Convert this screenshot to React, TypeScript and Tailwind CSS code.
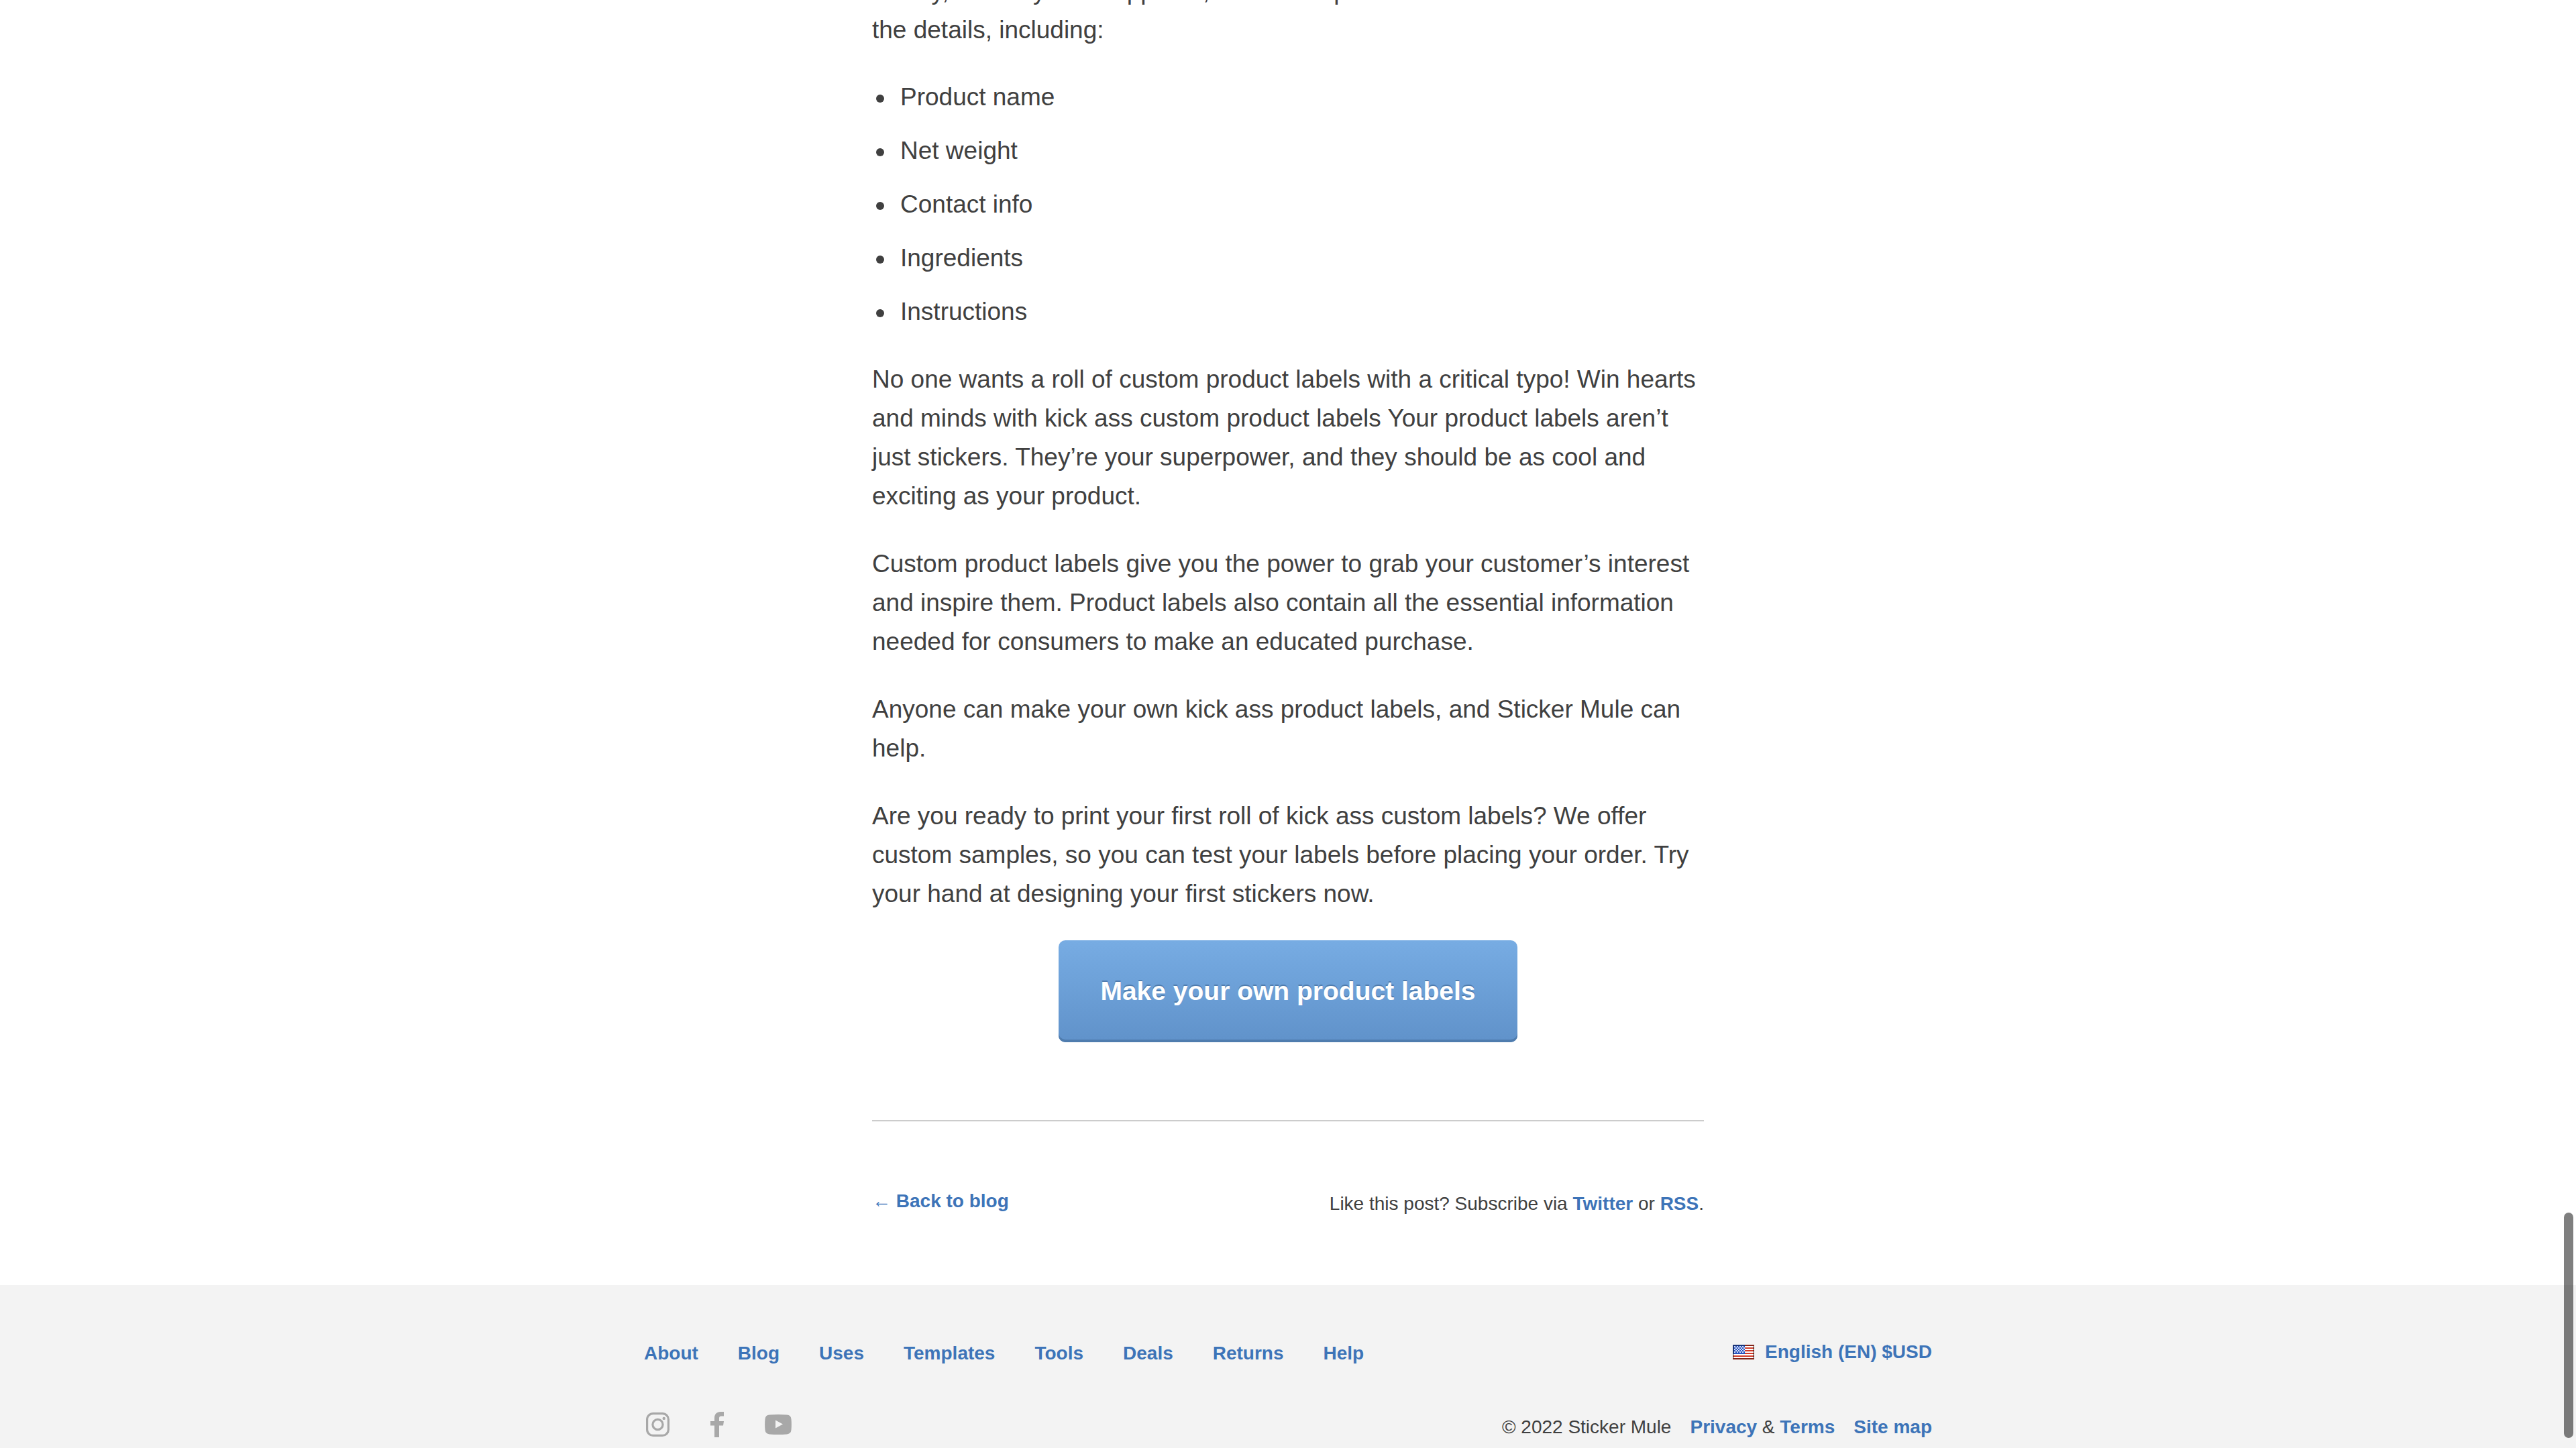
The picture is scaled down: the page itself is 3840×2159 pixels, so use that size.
import React from "react";

const paragraphs = [
  "No one wants a roll of custom product labels with a critical typo! Win hearts and minds with kick ass custom product labels Your product labels aren’t just stickers. They’re your superpower, and they should be as cool and exciting as your product.",
  "Custom product labels give you the power to grab your customer’s interest and inspire them. Product labels also contain all the essential information needed for consumers to make an educated purchase.",
  "Anyone can make your own kick ass product labels, and Sticker Mule can help.",
  "Are you ready to print your first roll of kick ass custom labels? We offer custom samples, so you can test your labels before placing your order. Try your hand at designing your first stickers now.",
];
const details = ["Product name", "Net weight", "Contact info", "Ingredients", "Instructions"];
const footerLinks = ["About", "Blog", "Uses", "Templates", "Tools", "Deals", "Returns", "Help"];

function InstagramIcon() {
  return (
    <svg viewBox="0 0 35 36" className="h-[36px] w-[35px]" fill="none" stroke="currentColor" strokeWidth="3.2" aria-hidden="true">
      <rect x="1.6" y="1.6" width="31.8" height="32.8" rx="9" />
      <circle cx="17.5" cy="18" r="7.6" />
      <circle cx="26.7" cy="8.9" r="2.2" fill="currentColor" stroke="none" />
    </svg>
  );
}

function FacebookIcon() {
  return (
    <svg viewBox="0 0 20 38" className="h-[38px] w-[20px]" fill="currentColor" aria-hidden="true">
      <path d="M6 38V20.500H0V14H6V9.500C6 3.500 9.500 0 15 0H20V6.500H16C13.600 6.500 13 7.800 13 10V14H20L19 20.500H13V38Z" />
    </svg>
  );
}

function YoutubeIcon() {
  return (
    <svg viewBox="0 0 40 30" className="h-[30px] w-[40px]" fill="currentColor" aria-hidden="true">
      <path fillRule="evenodd" d="M7 .6Q20-.4 33 .6Q39 1 39.500 7Q40.300 15 39.500 23Q39 29 33 29.400Q20 30.400 7 29.400Q1 29 .5 23Q-.3 15 .5 7Q1 1 7 .6ZM16 8.500V20.500L27 14.500Z" />
    </svg>
  );
}

function FlagIcon() {
  return (
    <svg viewBox="0 0 32 22" className="h-[22px] w-[32px]" aria-hidden="true">
      <rect width="32" height="22" rx="1" fill="#fff" />
      {[0, 4, 8, 12, 16, 20].map((y) => (
        <rect key={y} y={y} width="32" height="2" fill="#d03a27" />
      ))}
      <rect width="18" height="14" fill="#2a55c0" />
      {[2, 4, 6, 8, 10].map((y, row) =>
        [2, 6, 10, 14].map((x) => (
          <rect key={`${x}-${y}`} x={x + (row % 2 ? 2 : 0)} y={y} width="2" height="2" fill="#d5def5" />
        )),
      )}
      <path d="M0 1H32M0 21H32" stroke="#000" strokeOpacity=".38" strokeWidth="2" />
      <path d="M1 2V20M31 2V20" stroke="#000" strokeOpacity=".38" strokeWidth="2" />
    </svg>
  );
}

const link = "font-bold text-[#3d74b8] hover:underline";

export default function App() {
  return (
    <div className="flex h-screen flex-col overflow-hidden bg-white font-['Liberation_Sans',Arial,sans-serif] text-[#404040]">
      <main className="mx-auto w-full max-w-[1240px] shrink-0">
        <article className="text-[37px] leading-[58px]">
          <p className="-mt-[42px]">
            Finally, before you hit approve, be sure to proofread and check all of
            <br />
            the details, including:
          </p>
          <ul className="mt-[42px] space-y-[22px] pl-[6px]">
            {details.map((d) => (
              <li
                key={d}
                className="flex items-center gap-6 before:mt-1 before:size-3 before:rounded-full before:bg-[#404040]"
              >
                {d}
              </li>
            ))}
          </ul>
          {paragraphs.map((p) => (
            <p key={p} className="mt-[43px]">
              {p}
            </p>
          ))}
        </article>
        <div className="mt-[40px] flex justify-center">
          <button
            type="button"
            className="rounded-[10px] bg-linear-to-b from-[#77ace3] to-[#6092ca] px-[62px] py-[54px] text-[39px] leading-[44px] font-bold text-white shadow-[inset_0_-4px_0_#4f7cae] [text-shadow:0_-2px_0_#4f7cae]"
          >
            Make your own product labels
          </button>
        </div>
        <hr className="mt-[116px] border-0 border-t-2 border-[#ccc]" />
        <div className="flex items-start justify-between pt-[95px] pb-[97px] text-[28px] leading-[48px]">
          <a href="#blog" className={link}>
            <span className="font-['Liberation_Serif',serif] font-normal">←</span> Back to blog
          </a>
          <p className="mt-1">
            Like this post? Subscribe via{" "}
            <a href="#twitter" className={link}>Twitter</a> or <a href="#rss" className={link}>RSS</a>.
          </p>
        </div>
      </main>
      <footer className="grow bg-[#f3f3f3] text-[28px] leading-[44px]">
        <div className="mx-auto max-w-[1920px] pt-[78px]">
          <div className="flex items-start justify-between">
            <nav aria-label="Footer" className="mt-0.5 flex gap-[59px]">
              {footerLinks.map((l) => (
                <a key={l} href={`#${l.toLowerCase()}`} className={link}>{l}</a>
              ))}
            </nav>
            <button type="button" className="flex items-center gap-4 font-bold text-[#3d74b8]">
              <FlagIcon />
              English (EN) $USD
            </button>
          </div>
          <div className="mt-16 flex items-start justify-between">
            <div className="flex h-10 items-center gap-[61px] pl-[3px] text-[#a8a8a8]">
              <a href="#instagram" aria-label="Instagram"><InstagramIcon /></a>
              <a href="#facebook" aria-label="Facebook"><FacebookIcon /></a>
              <a href="#youtube" aria-label="YouTube"><YoutubeIcon /></a>
            </div>
            <p className="mt-0.5 flex gap-7">
              <span>© 2022 Sticker Mule</span>
              <span>
                <a href="#privacy" className={link}>Privacy</a> & <a href="#terms" className={link}>Terms</a>
              </span>
              <a href="#sitemap" className={link}>Site map</a>
            </p>
          </div>
        </div>
      </footer>
      <div className="absolute right-1 bottom-[15px] h-[336px] w-[14px] rounded-full bg-black/50" />
    </div>
  );
}
